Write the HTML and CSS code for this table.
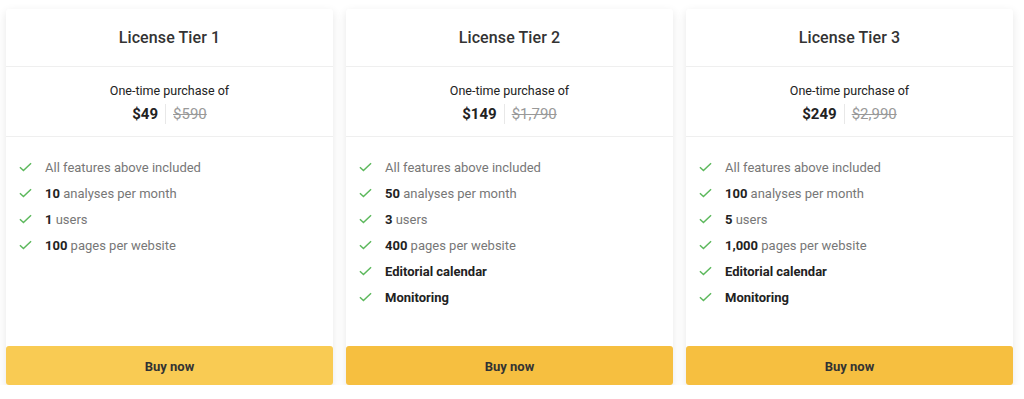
FILE: index.html
```html
<!DOCTYPE html>
<html>
<head>
<meta charset="utf-8">
<link rel="stylesheet" href="styles.css">
</head>
<body>
<div class="plans">
  <div class="card">
    <div class="head">License Tier 1</div>
    <div class="price">
      <div class="label">One-time purchase of</div>
      <div class="amounts"><span class="now">$49</span><span class="was">$590</span></div>
    </div>
    <ul class="features">
      <li><svg class="check" viewBox="0 0 14 10"><path d="M1 5.2 L4.8 8.8 L13 1"/></svg><span>All features above included</span></li>
      <li><svg class="check" viewBox="0 0 14 10"><path d="M1 5.2 L4.8 8.8 L13 1"/></svg><span><b>10</b> analyses per month</span></li>
      <li><svg class="check" viewBox="0 0 14 10"><path d="M1 5.2 L4.8 8.8 L13 1"/></svg><span><b>1</b> users</span></li>
      <li><svg class="check" viewBox="0 0 14 10"><path d="M1 5.2 L4.8 8.8 L13 1"/></svg><span><b>100</b> pages per website</span></li>
    </ul>
    <button class="buy light">Buy now</button>
  </div>
  <div class="card">
    <div class="head">License Tier 2</div>
    <div class="price">
      <div class="label">One-time purchase of</div>
      <div class="amounts"><span class="now">$149</span><span class="was">$1,790</span></div>
    </div>
    <ul class="features">
      <li><svg class="check" viewBox="0 0 14 10"><path d="M1 5.2 L4.8 8.8 L13 1"/></svg><span>All features above included</span></li>
      <li><svg class="check" viewBox="0 0 14 10"><path d="M1 5.2 L4.8 8.8 L13 1"/></svg><span><b>50</b> analyses per month</span></li>
      <li><svg class="check" viewBox="0 0 14 10"><path d="M1 5.2 L4.8 8.8 L13 1"/></svg><span><b>3</b> users</span></li>
      <li><svg class="check" viewBox="0 0 14 10"><path d="M1 5.2 L4.8 8.8 L13 1"/></svg><span><b>400</b> pages per website</span></li>
      <li><svg class="check" viewBox="0 0 14 10"><path d="M1 5.2 L4.8 8.8 L13 1"/></svg><span><b>Editorial calendar</b></span></li>
      <li><svg class="check" viewBox="0 0 14 10"><path d="M1 5.2 L4.8 8.8 L13 1"/></svg><span><b>Monitoring</b></span></li>
    </ul>
    <button class="buy">Buy now</button>
  </div>
  <div class="card">
    <div class="head">License Tier 3</div>
    <div class="price">
      <div class="label">One-time purchase of</div>
      <div class="amounts"><span class="now">$249</span><span class="was">$2,990</span></div>
    </div>
    <ul class="features">
      <li><svg class="check" viewBox="0 0 14 10"><path d="M1 5.2 L4.8 8.8 L13 1"/></svg><span>All features above included</span></li>
      <li><svg class="check" viewBox="0 0 14 10"><path d="M1 5.2 L4.8 8.8 L13 1"/></svg><span><b>100</b> analyses per month</span></li>
      <li><svg class="check" viewBox="0 0 14 10"><path d="M1 5.2 L4.8 8.8 L13 1"/></svg><span><b>5</b> users</span></li>
      <li><svg class="check" viewBox="0 0 14 10"><path d="M1 5.2 L4.8 8.8 L13 1"/></svg><span><b>1,000</b> pages per website</span></li>
      <li><svg class="check" viewBox="0 0 14 10"><path d="M1 5.2 L4.8 8.8 L13 1"/></svg><span><b>Editorial calendar</b></span></li>
      <li><svg class="check" viewBox="0 0 14 10"><path d="M1 5.2 L4.8 8.8 L13 1"/></svg><span><b>Monitoring</b></span></li>
    </ul>
    <button class="buy">Buy now</button>
  </div>
</div>
</body>
</html>
```

FILE: styles.css
```css
html, body {
  margin: 0;
  padding: 0;
  background: #ffffff;
  font-family: Roboto, "Liberation Sans", sans-serif;
}

.plans {
  display: flex;
  gap: 13px;
  padding: 9px 0 0 6px;
}

.card {
  width: 327px;
  height: 376px;
  background: #fff;
  display: flex;
  flex-direction: column;
  box-shadow: 0 3px 10px rgba(0, 0, 0, 0.10);
  border-radius: 3px;
}

.head {
  height: 57px;
  display: flex;
  align-items: center;
  justify-content: center;
  font-size: 16px;
  font-weight: 500;
  color: #333;
  border-bottom: 1px solid #efefef;
  letter-spacing: 0.1px;
}

.price {
  height: 70px;
  border-bottom: 1px solid #efefef;
  display: flex;
  flex-direction: column;
  align-items: center;
  padding-top: 16px;
  box-sizing: border-box;
}

.label {
  font-size: 12.5px;
  color: #222;
  line-height: 16px;
}

.amounts {
  display: flex;
  align-items: center;
  margin-top: 5px;
  font-size: 15px;
  line-height: 20px;
}

.now {
  font-weight: 700;
  color: #222;
  padding-right: 7px;
  border-right: 1px solid #e8e8e8;
}

.was {
  color: #999;
  text-decoration: line-through;
  padding-left: 7px;
}

.features {
  list-style: none;
  margin: 0;
  padding: 17px 0 0 13px;
  flex: 1;
}

.features li {
  display: flex;
  align-items: center;
  height: 26px;
  font-size: 13px;
  color: #777;
}

.features b {
  color: #222;
  font-weight: 700;
}

.check {
  width: 13px;
  height: 10px;
  margin-right: 13px;
  fill: none;
  stroke: #5cb85c;
  stroke-width: 1.6;
}

.buy {
  height: 39px;
  border: 0;
  border-radius: 3px;
  background: #f6bf40;
  font-family: Roboto, "Liberation Sans", sans-serif;
  font-size: 13px;
  font-weight: 700;
  color: #333;
  padding-top: 2px;
  cursor: pointer;
}

.buy.light {
  background: #f9cb53;
}
```
